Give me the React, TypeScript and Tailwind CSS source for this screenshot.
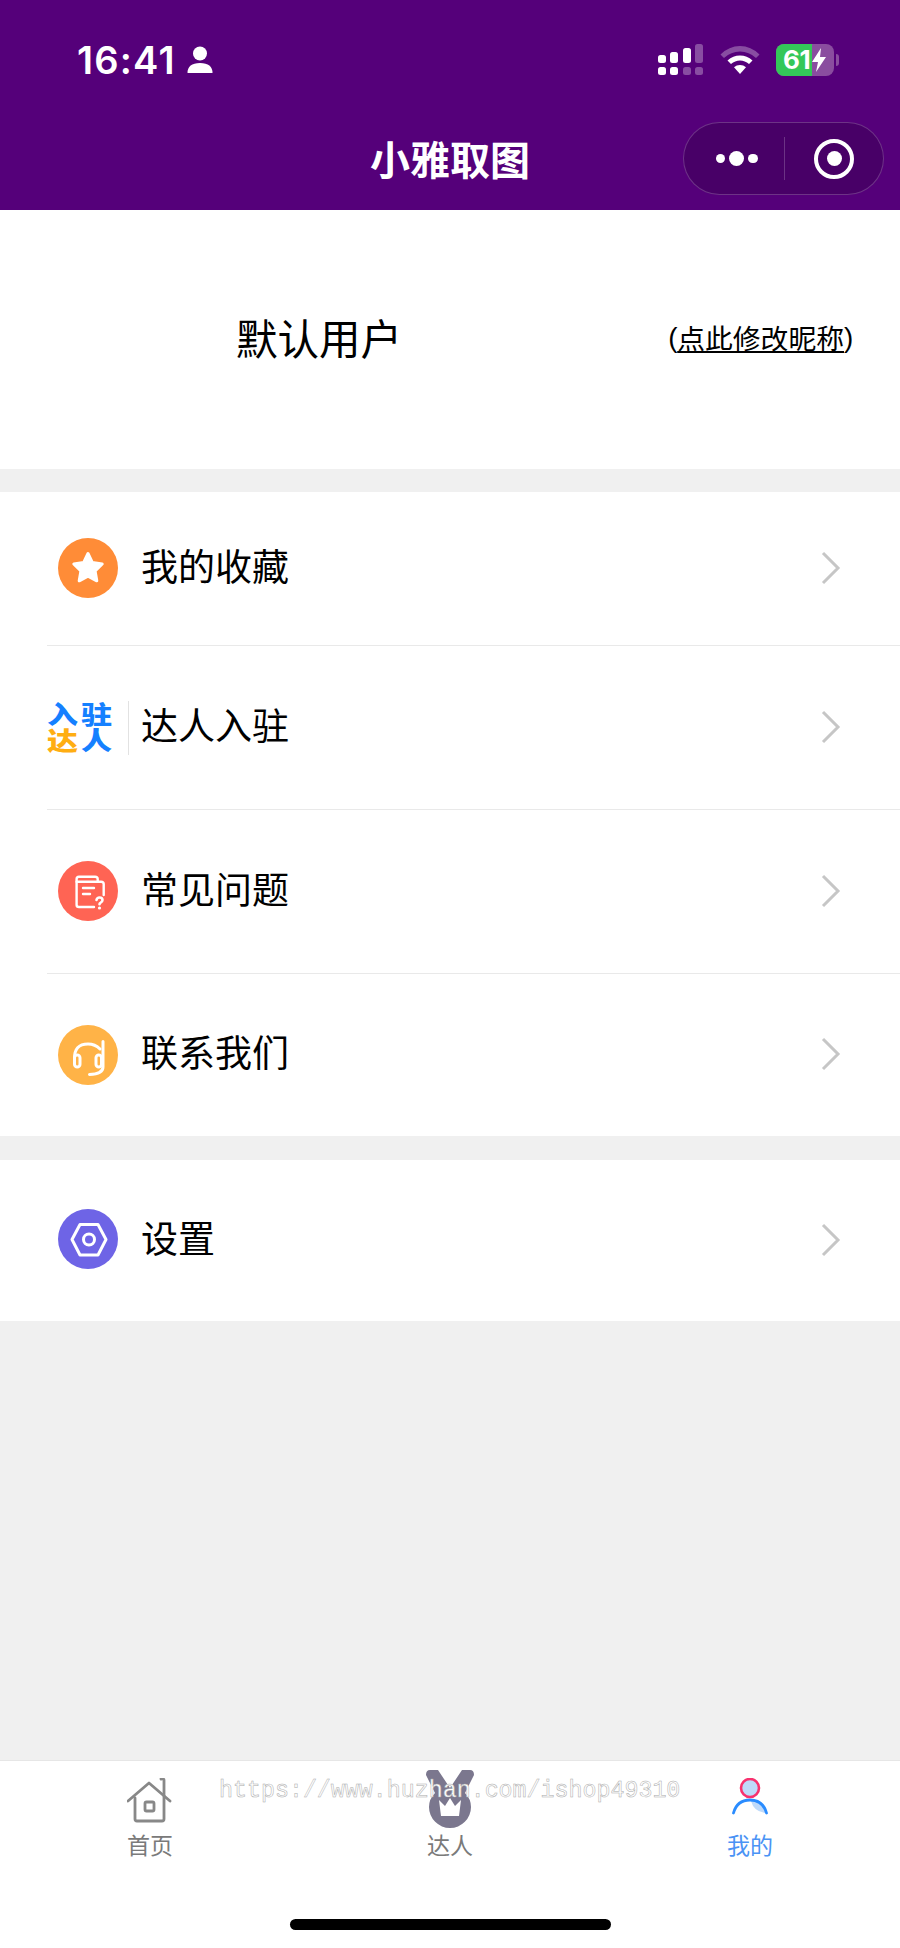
import React from "react";

const cjk = "font-['Noto_Sans_CJK_SC','Liberation_Sans',sans-serif]";

function Chevron() {
  return (
    <svg width="20" height="34" viewBox="0 0 20 34" className="mb-[2px] shrink-0">
      <path d="M2 2 L17 17 L2 32" fill="none" stroke="#c6c6c6" strokeWidth="3" />
    </svg>
  );
}

function Circle({ color, mb = "mb-[2px]", children }: { color: string; mb?: string; children: React.ReactNode }) {
  return (
    <svg width="60" height="60" viewBox="0 0 60 60" className={`ml-[10.500px] shrink-0 ${mb}`}>
      <circle cx="30" cy="30" r="30" fill={color} />
      {children}
    </svg>
  );
}

const star = (
  <Circle color="#ff8c37">
    <path
      d="M30 15.500 L34.400 24.600 L44.200 26 L37.100 33 L38.800 42.800 L30 38.200 L21.200 42.800 L22.900 33 L15.800 26 L25.600 24.600 Z"
      fill="#fff"
      stroke="#fff"
      strokeWidth="3"
      strokeLinejoin="round"
    />
  </Circle>
);

const faq = (
  <Circle color="#ff6454">
    <g fill="none" stroke="#fff" strokeWidth="2.400" strokeLinecap="round" strokeLinejoin="round">
      <path d="M36 46 H21 Q18.600 46 18.600 44 V18 Q18.600 15.700 21 15.700 H37 Q39.700 15.700 39.700 18 V20.700" />
      <path d="M18.600 20.700 H43 Q45.700 20.700 45.700 23 V34" />
      <path d="M25 27 H36" />
      <path d="M25 33 H32" />
      <path d="M38.500 39 Q39 36.500 41.500 36.500 Q44.500 36.500 44.500 39 Q44.500 41 42.500 41.800 Q41.500 42.300 41.500 43.200" strokeWidth="2.600" />
    </g>
    <circle cx="41.500" cy="47" r="1.600" fill="#fff" />
  </Circle>
);

const contact = (
  <Circle color="#ffb347" mb="mb-0">
    <g fill="none" stroke="#fff" strokeWidth="3" strokeLinecap="round" strokeLinejoin="round">
      <path d="M16.500 34 Q16 19 30 19 Q37 19 42 24" />
      <path d="M45 16.500 V42 Q45 49 31.500 49.500" />
      <rect x="16.500" y="30" width="5.500" height="12" rx="2.750" />
      <rect x="38" y="30" width="5.500" height="12" rx="2.750" />
    </g>
  </Circle>
);

const settings = (
  <Circle color="#6e64e6" mb="mb-[4px]">
    <path d="M22 15.500 H40 L48 30.500 L40 46 H22 L14 30.500 Z" fill="none" stroke="#fff" strokeWidth="3" strokeLinejoin="round" />
    <circle cx="31" cy="30.500" r="5.500" fill="none" stroke="#fff" strokeWidth="3" />
  </Circle>
);

function Row({ icon, label, h, border }: { icon: React.ReactNode; label: string; h: string; border?: boolean }) {
  return (
    <div className={`ml-[47px] flex items-center pr-[59px] ${h} ${border ? "border-b-[1.5px] border-[#e9e9e9]" : ""}`}>
      <div className="flex w-[94px] shrink-0 items-center">{icon}</div>
      <span className={`flex-1 pb-[7px] text-[37px] leading-none text-black ${cjk}`}>{label}</span>
      <Chevron />
    </div>
  );
}

export default function App() {
  return (
    <div className={`relative flex h-[1948px] w-[900px] flex-col overflow-hidden bg-[#f0f0f0] ${cjk}`}>
      <header className="flex h-[210px] shrink-0 flex-col bg-[#55007a] text-white">
        <div className="flex h-[122px] items-start justify-between pt-[40px] pl-[77px] pr-[61px]">
          <div className="flex items-center gap-[11px]">
            <span className="font-['Inter',sans-serif] text-[38px] leading-[40px] font-semibold tracking-[1.2px]">16:41</span>
            <svg width="26" height="28" viewBox="0 0 26 28">
              <circle cx="13" cy="7.500" r="7" fill="#fff" />
              <path d="M0.500 27 Q0.500 17 13 17 Q25.500 17 25.500 27 Z" fill="#fff" />
            </svg>
          </div>
          <div className="flex items-center gap-[16px] pt-[4px]">
            <svg width="46" height="32" viewBox="0 0 46 32">
              <g fill="#fff">
                <rect x="0" y="11" width="8" height="8" rx="2.500" />
                <rect x="12" y="8" width="8" height="11" rx="2.500" />
                <rect x="25" y="4" width="8" height="15" rx="2.500" />
                <rect x="0" y="23" width="8" height="8" rx="2.500" />
                <rect x="12" y="23" width="8" height="8" rx="2.500" />
              </g>
              <g fill="#fff" fillOpacity="0.3">
                <rect x="37" y="0" width="8" height="19" rx="2.500" />
                <rect x="25" y="23" width="8" height="8" rx="2.500" />
                <rect x="37" y="23" width="8" height="8" rx="2.500" />
              </g>
            </svg>
            <svg width="40" height="30" viewBox="0 0 40 30">
              <path d="M20 1 Q31 1 39.500 9.500 L36 13 Q29 6.500 20 6.500 Q11 6.500 4 13 L0.500 9.500 Q9 1 20 1 Z" fill="#fff" fillOpacity="0.3" />
              <path d="M20 10.500 Q27 10.500 32.500 15.500 L29 19 Q25 15.500 20 15.500 Q15 15.500 11 19 L7.500 15.500 Q13 10.500 20 10.500 Z" fill="#fff" />
              <path d="M20 20 Q23.500 20 26 22.200 L20 29 L14 22.200 Q16.500 20 20 20 Z" fill="#fff" />
            </svg>
            <div className="flex items-center gap-[2px]">
              <div className="relative flex h-[32px] w-[58px] items-center overflow-hidden rounded-[8px] bg-[#8a4d9f]">
                <div className="absolute inset-y-0 left-0 w-[36px] bg-[#34c759]" />
                <span className="relative ml-[7px] font-['Inter',sans-serif] text-[26px] leading-none font-bold tracking-[-0.5px] text-white">61</span>
                <svg width="16" height="24" viewBox="0 0 16 24" className="relative ml-[1px]">
                  <path d="M10 0 L1 14 H7 L5 24 L15 9 H9 Z" fill="#fff" />
                </svg>
              </div>
              <div className="h-[12px] w-[3px] rounded-r-[3px] bg-[#8a4d9f]" />
            </div>
          </div>
        </div>
        <div className="relative flex h-[74px] items-center justify-center">
          <span className="pb-[2px] text-[40px] leading-none font-bold">小雅取图</span>
          <div className="absolute top-0 right-[16px] flex h-[73px] w-[201px] items-center rounded-full border border-white/20 bg-black/15">
            <div className="flex w-[100px] items-center justify-center gap-[4px] pl-[5px]">
              <span className="h-[9.500px] w-[9.500px] rounded-full bg-white" />
              <span className="h-[15px] w-[15px] rounded-full bg-white" />
              <span className="h-[9.500px] w-[9.500px] rounded-full bg-white" />
            </div>
            <div className="h-[43px] w-px bg-white/20" />
            <div className="flex flex-1 items-center justify-center">
              <div className="flex h-[40px] w-[40px] items-center justify-center rounded-full border-[4px] border-white">
                <span className="h-[15px] w-[15px] rounded-full bg-white" />
              </div>
            </div>
          </div>
        </div>
      </header>

      <section className="relative flex h-[259px] shrink-0 items-center bg-white">
        <span className="ml-[236px] pb-[4px] text-[41.500px] leading-none text-black">默认用户</span>
        <span className="absolute top-[111px] right-[47px] flex text-[27.800px] leading-[1.2] text-black">
          <span className="w-[9px] font-['Liberation_Sans',sans-serif]">(</span>
          <span className="underline decoration-2 underline-offset-[2px]">点此修改昵称</span>
          <span className="w-[9px] font-['Liberation_Sans',sans-serif]">)</span>
        </span>
      </section>

      <section className="mt-[23px] shrink-0 bg-white">
        <Row icon={star} label="我的收藏" h="h-[154px]" border />
        <Row
          h="h-[164px]"
          border
          label="达人入驻"
          icon={
            <div className="flex h-[54px] items-center">
              <div className="mb-[4px] flex w-[65px] flex-col font-black">
                <div className="flex h-[26px] items-center justify-between text-[#1580ff]">
                  <span className="scale-y-[0.82] text-[31px] leading-[26px]">入</span>
                  <span className="scale-y-[0.82] text-[31px] leading-[26px]">驻</span>
                </div>
                <div className="flex h-[26px] items-center justify-between text-[#1580ff]">
                  <span className="scale-y-[0.82] text-[31px] leading-[26px] text-[#ffae12]">达</span>
                  <span className="scale-y-[0.82] text-[31px] leading-[26px]">人</span>
                </div>
              </div>
              <div className="ml-[16px] h-[54px] w-px bg-[#e2e2e2]" />
            </div>
          }
        />
        <Row icon={faq} label="常见问题" h="h-[164px]" border />
        <Row icon={contact} label="联系我们" h="h-[162px]" />
      </section>

      <section className="mt-[24px] shrink-0 bg-white">
        <Row icon={settings} label="设置" h="h-[161px]" />
      </section>

      <div className="flex-1" />

      <nav className="relative flex h-[188px] shrink-0 flex-col border-t border-[#e6e6e6] bg-white">
        <div className="grid grid-cols-3">
          <div className="flex flex-col items-center">
            <svg width="46" height="46" viewBox="0 0 46 46" className="mt-[17px]">
              <g fill="none" stroke="#888" strokeWidth="2.800" strokeLinecap="round" strokeLinejoin="round">
                <path d="M1 23 L22 5 L43 23" />
                <path d="M8 20 V41 Q8 43 10 43 H35 Q37 43 37 41 V2 Q37 0.500 34 1" />
                <rect x="18" y="24" width="9" height="9" rx="1.500" />
              </g>
            </svg>
            <span className="mt-[9px] text-[23px] leading-none text-[#7a7a7a]">首页</span>
          </div>
          <div className="flex flex-col items-center">
            <svg width="50" height="60" viewBox="0 0 50 60" className="mt-[9px]">
              <path d="M1 5 Q1 0 5 0 H13 L25 18 L37 0 H45 Q49 0 49 5 L40 23 Q46 29 46 37 A21 21 0 0 1 4 37 Q4 29 10 23 Z" fill="#7b778e" />
              <path d="M14 30 L20 36 L25 28 L30 36 L36 30 L34 46 H16 Z" fill="#fff" />
            </svg>
            <span className="mt-[3px] text-[23px] leading-none text-[#7a7a7a]">达人</span>
          </div>
          <div className="flex flex-col items-center">
            <svg width="36" height="38" viewBox="0 0 36 38" className="mt-[17px]">
              <circle cx="18" cy="10" r="9" fill="#bfdafa" stroke="#f8326f" strokeWidth="2.600" />
              <path d="M19 23 Q30 23 34 35 Q22 34 19 23 Z" fill="#bfdafa" />
              <path d="M1.500 35 Q5 22 18 22 Q31 22 34.500 35" fill="none" stroke="#2a8cff" strokeWidth="2.800" strokeLinecap="round" />
            </svg>
            <span className="mt-[17px] text-[23px] leading-none text-[#4a93f5]">我的</span>
          </div>
        </div>
        <div className="mt-auto mb-[18px] h-[11px] w-[321px] self-center rounded-full bg-black" />
        <span className="absolute top-[19px] left-[219px] font-['Liberation_Mono',monospace] text-[23.300px] leading-none whitespace-nowrap text-white [-webkit-text-stroke:0.5px_#aaaaaa]">
          https://www.huzhan.com/ishop49310
        </span>
      </nav>
    </div>
  );
}
